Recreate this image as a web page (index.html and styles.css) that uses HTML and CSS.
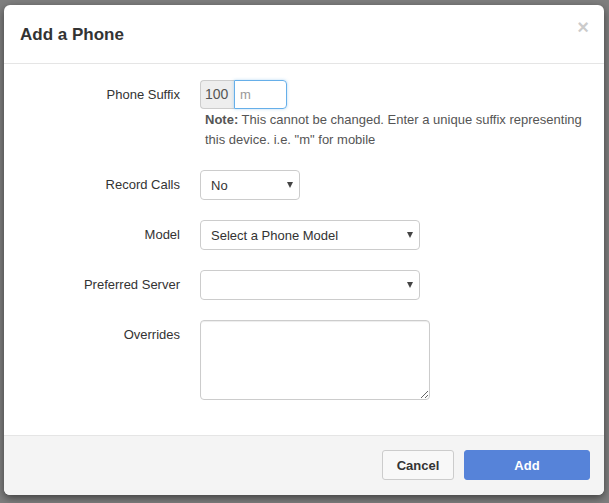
FILE: index.html
```html
<!DOCTYPE html>
<html>
<head>
<meta charset="utf-8">
<link rel="stylesheet" href="styles.css">
</head>
<body>
<div class="modal">
  <div class="modal-header">
    <h4 class="modal-title">Add a Phone</h4>
    <span class="close">×</span>
  </div>
  <div class="modal-body">
    <div class="form">
      <label class="label">Phone Suffix</label>
      <div class="control">
        <div class="input-group">
          <span class="addon">100</span>
          <span class="input focus"><span class="placeholder">m</span></span>
        </div>
        <p class="help"><b>Note:</b> This cannot be changed. Enter a unique suffix representing this device. i.e. "m" for mobile</p>
      </div>

      <label class="label">Record Calls</label>
      <div class="control">
        <div class="select small"><span>No</span><i class="caret"></i></div>
      </div>

      <label class="label">Model</label>
      <div class="control">
        <div class="select wide"><span>Select a Phone Model</span><i class="caret"></i></div>
      </div>

      <label class="label">Preferred Server</label>
      <div class="control">
        <div class="select wide"><span></span><i class="caret"></i></div>
      </div>

      <label class="label">Overrides</label>
      <div class="control">
        <textarea class="textarea"></textarea>
      </div>
    </div>
  </div>
  <div class="modal-footer">
    <button class="btn btn-default">Cancel</button>
    <button class="btn btn-primary">Add</button>
  </div>
</div>
</body>
</html>
```

FILE: styles.css
```css
html, body {
  margin: 0;
  padding: 0;
}
body {
  background: #7f7f7f;
  width: 609px;
  height: 503px;
  overflow: hidden;
  font-family: "Liberation Sans", Arial, sans-serif;
  font-size: 13px;
  color: #333;
}
.modal {
  margin: 5px 0 0 4px;
  width: 600px;
  height: 490px;
  background: #fff;
  border-radius: 6px;
  box-shadow: 0 3px 9px rgba(0, 0, 0, 0.5);
  display: flex;
  flex-direction: column;
  overflow: hidden;
}
.modal-header {
  height: 58px;
  border-bottom: 1px solid #e5e5e5;
  display: flex;
  justify-content: space-between;
  align-items: flex-start;
  padding: 0 15px 0 16px;
}
.modal-title {
  margin: 20px 0 0;
  font-size: 17px;
  font-weight: bold;
  line-height: 20px;
  color: #333;
}
.close {
  margin-top: 12px;
  font-size: 20px;
  font-weight: bold;
  line-height: 20px;
  color: #000;
  opacity: 0.2;
}
.modal-body {
  flex: 1;
  padding-top: 16px;
}
.form {
  display: grid;
  grid-template-columns: 176px 1fr;
  column-gap: 20px;
  row-gap: 20px;
}
.label {
  text-align: right;
  line-height: 29px;
  font-size: 13px;
  color: #333;
}
.control {
  display: flex;
  flex-direction: column;
  align-items: flex-start;
}
.input-group {
  display: flex;
  height: 29px;
}
.addon {
  width: 29px;
  border: 1px solid #ccc;
  border-right: 0;
  border-radius: 4px 0 0 4px;
  background: #eee;
  color: #555;
  font-size: 14px;
  line-height: 27px;
  padding-left: 4px;
  box-sizing: content-box;
}
.input {
  border: 1px solid #66afe9;
  border-radius: 0 4px 4px 0;
  box-shadow: 0 0 3px rgba(102, 175, 233, 0.5);
  padding-left: 5px;
  box-sizing: border-box;
  width: 53px;
}
.placeholder {
  color: #999;
  font-size: 13px;
  line-height: 27px;
}
.help {
  margin: 1px 0 0 5px;
  width: 390px;
  font-size: 13px;
  line-height: 20px;
  color: #555;
}
.help b {
  color: #555;
}
.select {
  height: 30px;
  box-sizing: border-box;
  border: 1px solid #ccc;
  border-radius: 4px;
  display: flex;
  align-items: center;
  justify-content: space-between;
  padding: 0 6px 0 10px;
  font-size: 13px;
  color: #333;
}
.select.small { width: 100px; }
.select.wide { width: 220px; }
.caret {
  width: 0;
  height: 0;
  border-left: 3px solid transparent;
  border-right: 3px solid transparent;
  border-top: 6px solid #444;
}
.textarea {
  width: 230px;
  height: 80px;
  box-sizing: border-box;
  border: 1px solid #ccc;
  border-radius: 4px;
  box-shadow: inset 0 1px 1px rgba(0, 0, 0, 0.075);
  margin: 0;
  font-family: inherit;
}
.modal-footer {
  border-top: 1px solid #e5e5e5;
  background: #f4f4f4;
  display: flex;
  justify-content: flex-end;
  align-items: flex-start;
  gap: 10px;
  padding: 14px 14px 0 0;
  box-sizing: border-box;
  height: 60px;
}
.btn {
  height: 30px;
  font-family: "Liberation Sans", Arial, sans-serif;
  font-size: 13px;
  font-weight: bold;
  border-radius: 3px;
  margin: 0;
  padding: 0;
}
.btn-default {
  width: 72px;
  background: #f8f8f8;
  border: 1px solid #ccc;
  color: #333;
}
.btn-primary {
  width: 126px;
  background: #5683d9;
  border: 1px solid #5683d9;
  color: #fff;
}
```
